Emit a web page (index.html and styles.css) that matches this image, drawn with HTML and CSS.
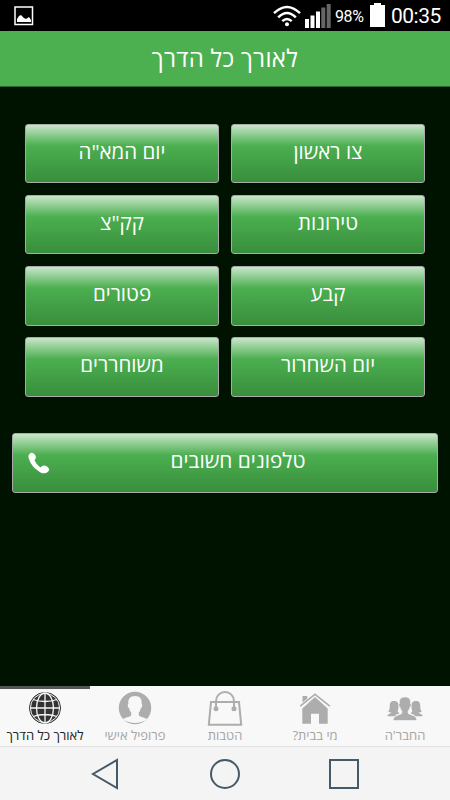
FILE: index.html
```html
<!DOCTYPE html>
<html lang="he">
<head>
<meta charset="utf-8">
<meta name="viewport" content="width=device-width">
<title>לאורך כל הדרך</title>
<link rel="stylesheet" href="styles.css">
</head>
<body>
<div class="screen">
  <div class="status">
    <svg class="gallery" width="20" height="20" viewBox="0 0 20 20"><rect x="1" y="1" width="17.5" height="17.5" fill="none" stroke="#fff" stroke-width="1.5"/><path d="M3 16v-3l2-3 2-1 3 3 2 1 3-2 2 3v2z" fill="#fff"/></svg>
    <svg class="wifi" width="28" height="22" viewBox="0 0 28 22"><g fill="none" stroke="#fff" stroke-width="2.5"><path d="M1 8.200Q14-4.200 27 8.200"/><path d="M5.200 12.300Q14 3.700 22.800 12.300"/><path d="M9.300 16.200Q14 11.800 18.700 16.200"/></g><circle cx="14" cy="19.300" r="2" fill="#fff"/></svg>
    <svg class="signal" width="26" height="24" viewBox="0 0 26 24"><path d="M0 15h4v9H0zM5.500 11.500h4V24h-4zM11 7.500h4V24h-4z" fill="#fff"/><path d="M16.300 3.500h4V24h-4zM21.700 0h4v24h-4z" fill="#666"/></svg>
    <span class="percent">98%</span>
    <svg class="battery" width="15" height="24" viewBox="0 0 15 24"><path d="M4 0h7v2h4v22H0V2h4z" fill="#fff"/></svg>
    <span class="clock">00:35</span>
  </div>
  <header class="title"><span dir="rtl">לאורך כל הדרך</span></header>
  <main class="content">
    <div class="grid" dir="rtl">
      <div class="button"><span>צו ראשון</span></div>
      <div class="button"><span>יום המא"ה</span></div>
      <div class="button"><span>טירונות</span></div>
      <div class="button"><span>קק"צ</span></div>
      <div class="button"><span>קבע</span></div>
      <div class="button"><span>פטורים</span></div>
      <div class="button"><span>יום השחרור</span></div>
      <div class="button"><span>משוחררים</span></div>
    </div>
    <div class="button phones">
      <svg class="handset" width="22" height="22" viewBox="0 0 22 22"><path d="M1.200 2.200Q4-.6 6.800 2.400Q9.200 5.600 6.500 8.200Q8.200 12.300 12.300 15.400Q15.500 12.200 19 14.500Q22.600 17.200 20.200 19.500Q17.200 22.600 12.500 20.500Q2.800 15.200.5 5.600Q.2 3.300 1.200 2.200z" fill="#fff"/></svg>
      <span dir="rtl">טלפונים חשובים</span>
    </div>
  </main>
  <nav class="tabs">
    <div class="tab active">
      <svg width="36" height="36" viewBox="0 0 36 36"><circle cx="18" cy="18" r="15.500" fill="#333" stroke="#333"/><circle cx="18" cy="18" r="14.600" fill="none" stroke="#f8f8f8" stroke-width="1"/><g fill="none" stroke="#f8f8f8" stroke-width="1.300"><path d="M18 3v30M3 18h30M6 9.500Q18 13.500 30 9.500M6 26.500Q18 22.500 30 26.500"/><ellipse cx="18" cy="18" rx="8.500" ry="15"/></g></svg>
      <span dir="rtl">לאורך כל הדרך</span>
    </div>
    <div class="tab">
      <svg width="36" height="36" viewBox="0 0 36 36"><circle cx="18" cy="18" r="16.200" fill="#adadad"/><path d="M18 6c-5.200 0-7.200 3.500-6.600 8-1 0-.8 3.500.8 4.100.3 2.200 1.100 3.500 2 4.400v2.800c-1.500 1.900-6.500 2.300-8.300 3.900Q11.500 33 18 33T30.100 29.200c-1.800-1.600-6.800-2-8.300-3.900v-2.800c.9-.9 1.700-2.200 2-4.400 1.600-.6 1.800-4.100.8-4.100.6-4.500-1.400-8-6.600-8z" fill="#f8f8f8"/></svg>
      <span dir="rtl">פרופיל אישי</span>
    </div>
    <div class="tab">
      <svg width="36" height="36" viewBox="0 0 36 36"><g fill="none" stroke="#adadad" stroke-width="2"><path d="M4 12h28l2.200 22.800H1.800z"/><path d="M9 18.500V11a9 9 0 0 1 18 0v7.500"/></g><circle cx="9" cy="18.800" r="2.500" fill="#adadad"/><circle cx="27" cy="18.800" r="2.500" fill="#adadad"/></svg>
      <span dir="rtl">הטבות</span>
    </div>
    <div class="tab">
      <svg width="36" height="36" viewBox="0 0 36 36"><path d="M18 7l12.700 11.500V33.800H22v-10h-8v10H5.300V18.500z" fill="#adadad"/><path d="M5.500 12.500V6h4.700v2.700z" fill="#adadad"/><path d="M3.200 16.200L18 4.300l14.800 11.900" fill="none" stroke="#adadad" stroke-width="1.500"/></svg>
      <span dir="rtl">מי בבית?</span>
    </div>
    <div class="tab">
      <svg width="36" height="36" viewBox="0 0 36 36"><g fill="#adadad"><path d="M7 11c-3.300 0-4.200 2-4.200 4.500 0 3.500-.6 5-1.600 6 1 .8 2.300 1 3.300 1.100-.5 1.200-3.700 1.200-4.200 3.600h7.500c1-1.800 3-2 4.500-2.600L10.500 21c.8-.8 1-3.200 1-5.500C11.500 13 10.300 11 7 11z"/><path d="M29 11c3.300 0 4.200 2 4.200 4.500 0 3.500.6 5 1.600 6-1 .8-2.300 1-3.300 1.100.5 1.200 3.700 1.200 4.200 3.600h-7.500c-1-1.800-3-2-4.500-2.600l1.800-2.600c-.8-.8-1-3.200-1-5.500 0-2.500 1.200-4.500 4.500-4.500z"/></g><path d="M18 7c-4.400 0-6 2.700-5.500 6.500-1.100 0-.8 3.200.6 3.700.3 1.800 1 2.800 1.800 3.500v2.500c-2 2.100-8.600 1.600-8.800 7.300h23.800c-.2-5.700-6.800-5.200-8.800-7.300v-2.500c.8-.7 1.500-1.700 1.800-3.500 1.400-.5 1.700-3.700.6-3.700C24 9.700 22.400 7 18 7z" fill="#adadad" stroke="#f8f8f8" stroke-width=".6"/></svg>
      <span dir="rtl">החבר'ה</span>
    </div>
  </nav>
  <div class="system">
    <svg width="30" height="32" viewBox="0 0 30 32"><path d="M26 2v28L2 16z" fill="none" stroke="#455a68" stroke-width="2"/></svg>
    <svg width="30" height="32" viewBox="0 0 30 32"><circle cx="15" cy="16" r="14" fill="none" stroke="#455a68" stroke-width="2"/></svg>
    <svg width="30" height="32" viewBox="0 0 30 32"><rect x="1" y="2" width="28" height="28" fill="none" stroke="#455a68" stroke-width="2"/></svg>
  </div>
</div>
</body>
</html>
```
FILE: styles.css
```css
* { box-sizing: border-box; }
body { margin: 0; font-family: "Open Sans", "Noto Sans", sans-serif; }
svg { display: block; flex: none; }
.screen { width: 450px; height: 800px; display: flex; flex-direction: column; overflow: hidden; background: #001200; }
.status { height: 31px; background: #000; color: #fff; display: flex; align-items: flex-start; font-family: Roboto, sans-serif; white-space: nowrap; }
.gallery { margin: 6px 0 0 14px; }
.wifi { margin: 5px 0 0 239px; }
.signal { margin: 3.5px 0 0 4px; }
.percent { width: 30px; margin: 7px 0 0 4px; font-size: 16px; line-height: 19px; letter-spacing: -.4px; }
.battery { margin: 3px 0 0 5px; }
.clock { margin: 4px 0 0 6px; font-size: 21px; line-height: 25px; letter-spacing: -.5px; }
.title { height: 56px; background: #4caf50; border-bottom: 1px solid #2b642d; color: #fff; font-size: 24px; letter-spacing: .3px; line-height: 53px; text-align: center; white-space: nowrap; }
.content { flex: 1; padding: 36.500px 12px 0; }
.grid { display: grid; grid-template-columns: 194px 194px; grid-auto-rows: 59.500px; gap: 11.800px 12px; padding: 0 13px; }
.button { height: 59.500px; border: 1.500px solid #aaa; border-radius: 3px; background: linear-gradient(#c8e6c9 0, #4caf50 36%, #388e3c 100%); color: #fff; font-size: 20.500px; line-height: 52px; text-align: center; white-space: nowrap; }
.phones { display: flex; align-items: flex-start; margin-top: 36.500px; }
.phones span { flex: 1; padding-right: 11px; font-size: 20.800px; }
.handset { margin: 18px 0 0 15px; }
.tabs { height: 61px; display: grid; grid-template-columns: repeat(5, 1fr); background: #f8f8f8; border-bottom: 1px solid #e2e2e2; }
.tab { display: flex; flex-direction: column; align-items: center; padding-top: 1px; border-top: 3px solid #f8f8f8; color: #a5a5a5; font-size: 13px; line-height: 18px; white-space: nowrap; }
.tab.active { border-color: #555; color: #222; }
.system { height: 53px; background: #f4f4f4; display: flex; justify-content: center; gap: 89px; padding-top: 11px; }
```
